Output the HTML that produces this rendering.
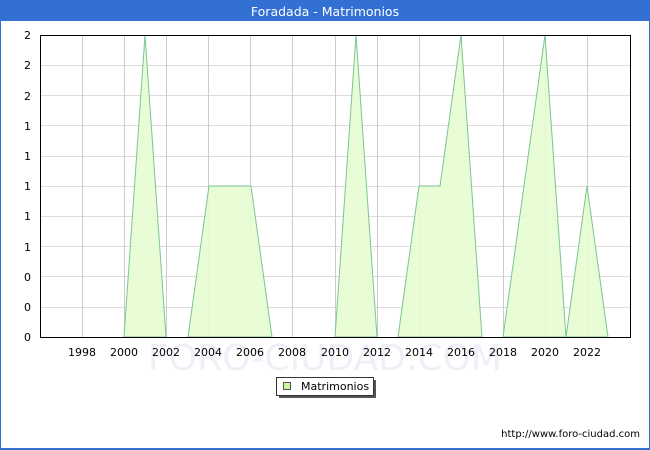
<html><head><style>body{margin:0;width:650px;height:450px;overflow:hidden;font-family:"DejaVu Sans","Liberation Sans",sans-serif}</style></head><body>
<svg width="650" height="450" xmlns="http://www.w3.org/2000/svg" font-family="DejaVu Sans, Liberation Sans, sans-serif">
<rect x="0" y="0" width="650" height="450" fill="#3370d4"/>
<rect x="1" y="21" width="648" height="427" fill="#fff"/>
<text x="325" y="16" fill="#fff" font-size="12.5" text-anchor="middle">Foradada - Matrimonios</text>
<g stroke="#dddddd" stroke-width="1">
<line x1="40" y1="65.5" x2="630" y2="65.5"/><line x1="40" y1="95.5" x2="630" y2="95.5"/><line x1="40" y1="125.5" x2="630" y2="125.5"/><line x1="40" y1="156.5" x2="630" y2="156.5"/><line x1="40" y1="186.5" x2="630" y2="186.5"/><line x1="40" y1="216.5" x2="630" y2="216.5"/><line x1="40" y1="246.5" x2="630" y2="246.5"/><line x1="40" y1="276.5" x2="630" y2="276.5"/><line x1="40" y1="307.5" x2="630" y2="307.5"/>
</g>
<g stroke="#cccccc" stroke-width="1">
<line x1="82.5" y1="35" x2="82.5" y2="337"/><line x1="124.5" y1="35" x2="124.5" y2="337"/><line x1="166.5" y1="35" x2="166.5" y2="337"/><line x1="208.5" y1="35" x2="208.5" y2="337"/><line x1="250.5" y1="35" x2="250.5" y2="337"/><line x1="292.5" y1="35" x2="292.5" y2="337"/><line x1="335.5" y1="35" x2="335.5" y2="337"/><line x1="377.5" y1="35" x2="377.5" y2="337"/><line x1="419.5" y1="35" x2="419.5" y2="337"/><line x1="461.5" y1="35" x2="461.5" y2="337"/><line x1="503.5" y1="35" x2="503.5" y2="337"/><line x1="545.5" y1="35" x2="545.5" y2="337"/><line x1="587.5" y1="35" x2="587.5" y2="337"/>
</g>
<path d="M124,337 L145,35 L166,337 Z M188,337 L209,186 L251,186 L272,337 Z M335,337 L356,35 L377,337 Z M398,337 L419,186 L440,186 L461,35 L482,337 Z M503,337 L524,186 L545,35 L566,337 L587,186 L608,337 Z" fill="#e6fcd0" fill-opacity="0.9" stroke="#7cc494" stroke-width="1"/>
<text x="325" y="370" font-size="36" fill="#eef0f8" text-anchor="middle">FORO-CIUDAD.COM</text>
<rect x="40.5" y="35.5" width="590" height="302" fill="none" stroke="#000" stroke-width="1"/>
<g font-size="11" fill="#000" text-anchor="end">
<text x="31" y="39">2</text><text x="31" y="69">2</text><text x="31" y="100">2</text><text x="31" y="130">1</text><text x="31" y="160">1</text><text x="31" y="190">1</text><text x="31" y="220">1</text><text x="31" y="251">1</text><text x="31" y="281">0</text><text x="31" y="311">0</text><text x="31" y="341">0</text>
</g>
<g font-size="11" fill="#000" text-anchor="middle">
<text x="82" y="356">1998</text><text x="124" y="356">2000</text><text x="166" y="356">2002</text><text x="208" y="356">2004</text><text x="250" y="356">2006</text><text x="292" y="356">2008</text><text x="335" y="356">2010</text><text x="377" y="356">2012</text><text x="419" y="356">2014</text><text x="461" y="356">2016</text><text x="503" y="356">2018</text><text x="545" y="356">2020</text><text x="587" y="356">2022</text>
</g>
<rect x="279" y="380" width="97" height="18" fill="#555"/>
<rect x="276.5" y="377.5" width="97" height="18" fill="#fff" stroke="#333"/>
<rect x="283.5" y="382.5" width="7" height="7" fill="#ccf5a0" stroke="#555"/>
<text x="301" y="390" font-size="11" fill="#000">Matrimonios</text>
<text x="640" y="437" font-size="10" fill="#000" text-anchor="end">http://www.foro-ciudad.com</text>
</svg>
</body></html>
